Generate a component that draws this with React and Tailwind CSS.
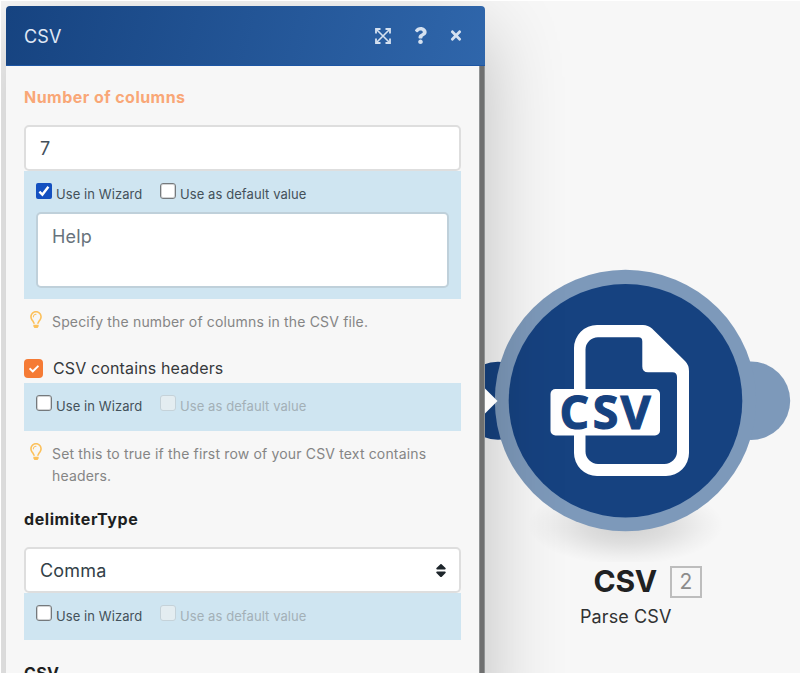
import React from "react";
import { FaQuestion, FaTimes, FaCheck, FaRegLightbulb, FaSort } from "react-icons/fa";

function ExpandIcon() {
  return (
    <svg width="16" height="16" viewBox="0 0 16 16" fill="none" stroke="currentColor">
      <path d="M1 5.500V1h4.500M10.500 1H15v4.500M15 10.500V15h-4.500M5.500 15H1v-4.500" strokeWidth="1.800" />
      <path d="M1.500 1.500l13 13M14.500 1.500l-13 13" strokeWidth="1.600" />
    </svg>
  );
}

function Box({ checked, disabled }) {
  if (checked)
    return (
      <span className="flex size-4 shrink-0 items-center justify-center rounded-[2px] bg-[#1450c0] text-white">
        <svg width="12" height="12" viewBox="0 0 12 12" fill="none" stroke="currentColor" strokeWidth="2.4">
          <path d="M1.4 6.6l3 3L10.4 1.8" />
        </svg>
      </span>
    );
  return (
    <span
      className={
        disabled
          ? "size-4 shrink-0 rounded-[3px] border border-[#c5d2d9] bg-[#e4edf1]"
          : "size-4 shrink-0 rounded-[3px] border border-[#75797c] bg-white shadow-[inset_0_0_0_1px_#d2d3d4]"
      }
    />
  );
}

function WizardOptions({ wizard, defaultDisabled }) {
  return (
    <div className="flex h-4">
      <div className="flex w-[124px] gap-1">
        <Box checked={wizard} />
        <span className="mt-[3px] text-[13px] leading-4 tracking-[0.08px] whitespace-nowrap text-[#44515a]">Use in Wizard</span>
      </div>
      <div className="flex gap-1">
        <Box disabled={defaultDisabled} />
        <span
          className={
            defaultDisabled
              ? "mt-[3px] text-[13px] leading-4 tracking-[0.08px] whitespace-nowrap text-[#a3b0b7]"
              : "mt-[3px] text-[13px] leading-4 tracking-[0.08px] whitespace-nowrap text-[#44515a]"
          }
        >
          Use as default value
        </span>
      </div>
    </div>
  );
}

function Hint({ children }) {
  return (
    <div className="flex pl-[5px]">
      <FaRegLightbulb className="h-[17px] w-[14px] shrink-0 text-[#fcc15c]" />
      <p className="ml-[9px] text-[14px] leading-[21.5px] tracking-[0.16px] text-[#858585]">{children}</p>
    </div>
  );
}

function Panel() {
  return (
    <section className="relative z-10 mt-[5px] ml-[5px] flex h-[720px] w-[479px] shrink-0 flex-col rounded-t-[4px] shadow-[0_26px_80px_rgba(0,0,0,0.24)]">
      <header className="flex h-[60px] shrink-0 items-center rounded-t-[4px] border-b border-[#1d56a4] bg-linear-[105deg,#164380,#2f66ab] pl-[18px] text-[#e0e9f5]">
        <h1 className="mt-[2px] text-[18px] tracking-[0.2px]">CSV</h1>
        <div className="mr-[22px] ml-auto flex items-center text-[#d5e1f0]">
          <ExpandIcon />
          <FaQuestion className="ml-[23px] h-[17px] w-[13px]" />
          <FaTimes className="ml-[22px] h-[15px] w-[14px]" />
        </div>
      </header>
      <div className="flex min-h-0 flex-1">
        <div className="w-[473px] bg-[#f7f7f7] pl-[18px]">
          <div className="w-[437px]">
            <h2 className="pt-[19px] text-[16px] leading-6 font-bold tracking-[0.46px] text-[#f9a777]">Number of columns</h2>
            <div className="mt-[16px] flex h-[46px] items-center rounded-[5px] border-2 border-[#dedede] bg-white pl-[14px] text-[18px] text-[#44505a]">7</div>
            <div className="h-[128px] bg-[#cfe5f1] px-3 pt-3">
              <WizardOptions wizard />
              <div className="mt-[13px] h-[76px] rounded-[5px] border-2 border-[#bfd0da] bg-white px-[14px] pt-[11px] text-[18px] leading-6 tracking-[0.2px] text-[#68737c]">Help</div>
            </div>
            <div className="mt-[12px] h-[48px]">
              <Hint>Specify the number of columns in the CSV file.</Hint>
            </div>
            <div className="flex h-[19px] items-center gap-[10px]">
              <span className="flex size-[19px] items-center justify-center rounded-[4px] bg-[#f57b35] text-white">
                <FaCheck className="size-[10px]" />
              </span>
              <span className="-mt-[2px] text-[16px] tracking-[0.13px] text-[#36393c]">CSV contains headers</span>
            </div>
            <div className="mt-[5px] h-[48px] bg-[#cfe5f1] px-3 pt-3">
              <WizardOptions defaultDisabled />
            </div>
            <div className="mt-[12px] h-[64px]">
              <Hint>Set this to true if the first row of your CSV text contains headers.</Hint>
            </div>
            <h2 className="text-[16px] leading-6 font-bold tracking-[0.56px] text-[#1d1f21]">delimiterType</h2>
            <div className="mt-[16px] flex h-[46px] items-center justify-between rounded-[5px] border-2 border-[#dedede] bg-white pr-[12px] pl-[14px] text-[18px] tracking-[0.2px] text-[#333f48]">
              Comma
              <FaSort className="h-[17px] w-[12px] text-[#1e262c]" />
            </div>
            <div className="h-[47px] bg-[#cfe5f1] px-3 pt-3">
              <WizardOptions defaultDisabled />
            </div>
            <h2 className="mt-[21px] text-[16px] leading-6 font-bold tracking-[0.4px] text-[#1d1f21]">CSV</h2>
          </div>
        </div>
        <div className="w-[6px] border-x border-[#909394] bg-[#6f7070]" />
      </div>
    </section>
  );
}

function ModuleNode() {
  return (
    <div className="absolute top-[261px] left-[449px] flex w-[350px] flex-col">
      <svg width="350" height="300" viewBox="450 262 350 300">
        <defs>
          <radialGradient id="ground">
            <stop offset="0" stopColor="#000" stopOpacity="0.16" />
            <stop offset="0.45" stopColor="#000" stopOpacity="0.1" />
            <stop offset="0.8" stopColor="#000" stopOpacity="0.03" />
            <stop offset="1" stopColor="#000" stopOpacity="0" />
          </radialGradient>
        </defs>
        <ellipse cx="625.500" cy="525" rx="98" ry="40" fill="url(#ground)" />
        <circle cx="498" cy="400.700" r="39" fill="#164280" />
        <circle cx="751" cy="400.700" r="39.200" fill="#7d99ba" />
        <circle cx="625.500" cy="400.500" r="130.700" fill="#7d99ba" />
        <circle cx="625.500" cy="400.700" r="116.800" fill="#164280" />
        <path
          fill="#fff"
          fillRule="evenodd"
          d="M597 325H643Q648 325 652 328.500L685 361Q689 365 689 371V453A23 23 0 0 1 666 476H597A23 23 0 0 1 574 453V348A23 23 0 0 1 597 325ZM598 337.300A12.500 12.500 0 0 0 585.500 349.500V451.500A12.500 12.500 0 0 0 598 464H664.500A12.500 12.500 0 0 0 677 451.500V377Q677 372.300 672.500 372.300H648Q642.300 372.300 642.300 366.500V341.500Q642.300 337.300 638.500 337.300Z"
        />
        <rect x="550.500" y="389" width="109.500" height="46.500" rx="5" fill="#fff" />
        <text
          x="559.500 592.800 620.500"
          y="429"
          fontSize="46.500"
          fontWeight="700"
          fill="#164280"
          stroke="#164280"
          strokeWidth="1.100"
          className="font-['Open_Sans']"
        >
          CSV
        </text>
      </svg>
      <div className="mt-[4px] flex items-center pl-[143.500px]">
        <span className="mt-[-3px] text-[30px] leading-9 font-bold tracking-[-0.3px] text-[#202122]">CSV</span>
        <span className="mt-[-2px] ml-[13px] flex h-[32px] w-[32px] items-center justify-center border-2 border-[#bdbdbd] text-[21px] text-[#8c8c8c]">2</span>
      </div>
      <div className="mt-[6px] pl-[130px] text-[18px] leading-6 tracking-[0.1px] text-[#303132]">Parse CSV</div>
    </div>
  );
}

export default function App() {
  return (
    <div className="h-[675px] w-[800px] overflow-hidden bg-white pt-px pl-px font-['Inter',sans-serif]">
      <main className="relative flex h-[672px] w-[799px] overflow-hidden bg-[#f7f7f7]">
        <ModuleNode />
        <Panel />
        <svg className="absolute top-[387px] left-[484px] z-20" width="13" height="26" viewBox="0 0 13 26">
          <path d="M0 .5l12.500 12.500L0 25.500z" fill="#fbfbfb" />
        </svg>
      </main>
    </div>
  );
}
